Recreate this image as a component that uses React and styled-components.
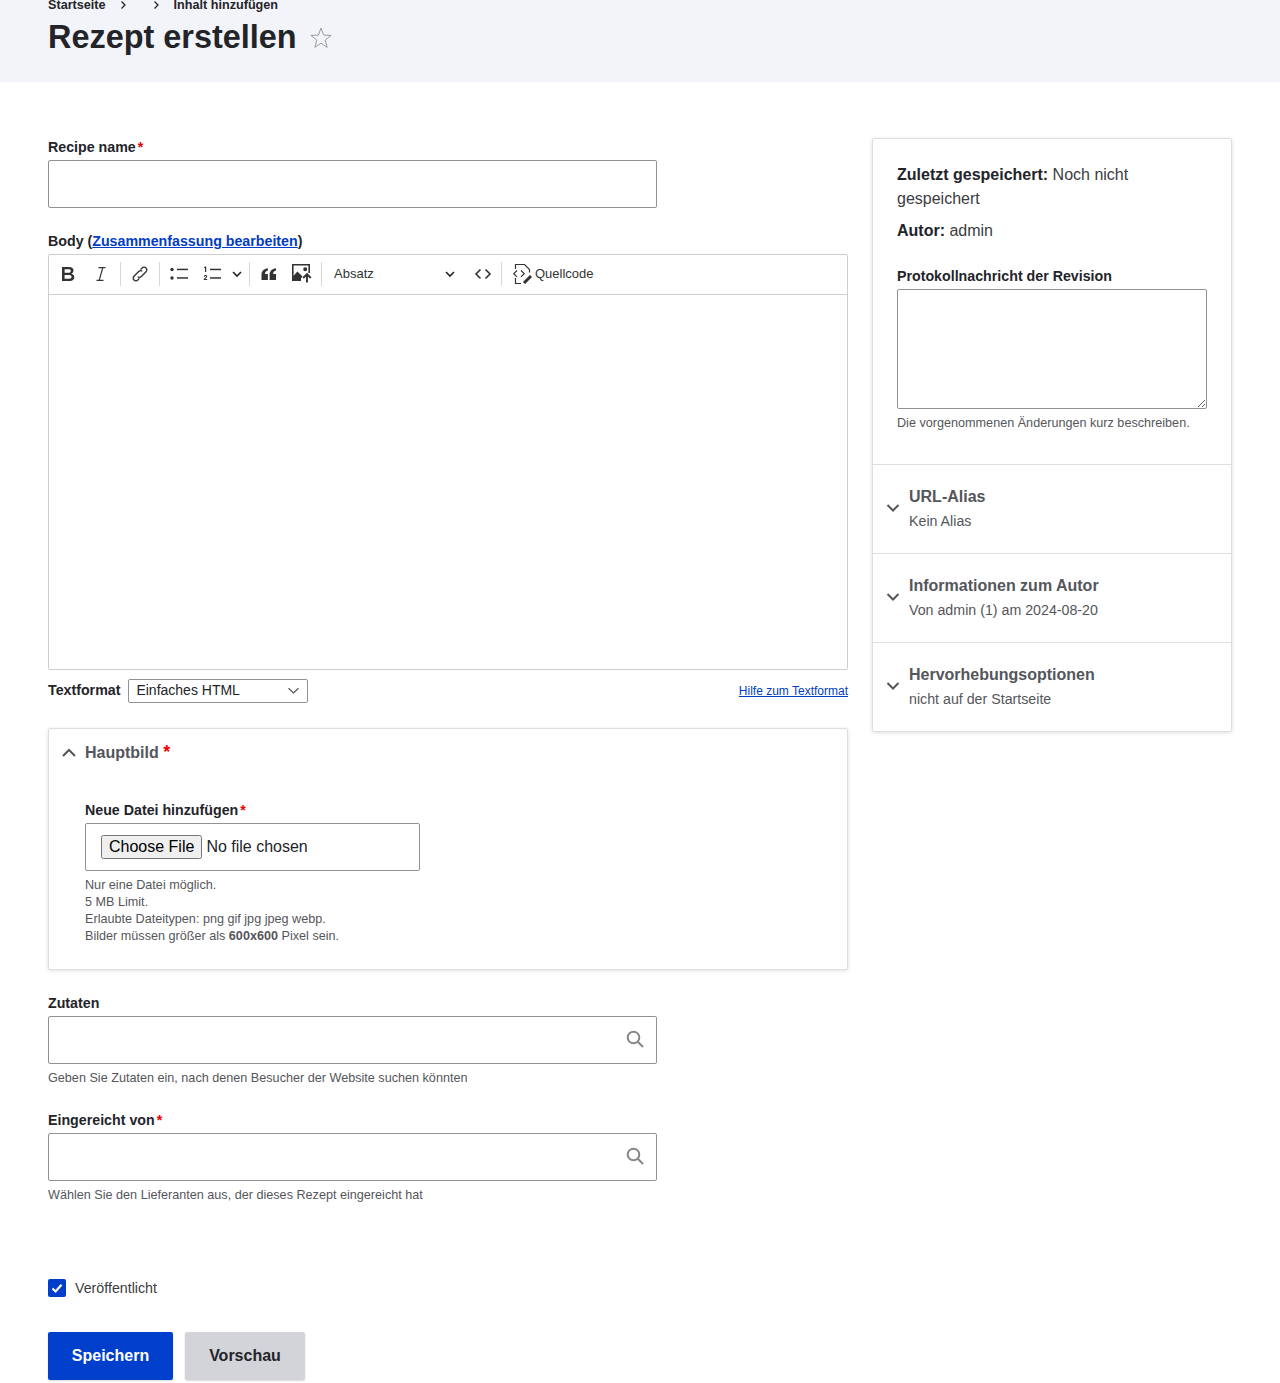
import React from 'react';
import styled, { createGlobalStyle } from 'styled-components';

const GlobalStyle = createGlobalStyle`
  html, body {
    margin: 0;
    padding: 0;
    background: #fff;
    color: #232429;
    font-family: "Liberation Sans", Arial, sans-serif;
  }
  * { box-sizing: border-box; }
`;

const colors = { text: '#232429', muted: '#55565b', border: '#919297', line: '#dedfe4', blue: '#003ecc' };

// Page header
const Header = styled.header`
  height: 82px;
  padding-left: 48px;
  background: #f3f4f9;
  overflow: hidden;
`;

const Crumbs = styled.nav`
  display: flex;
  align-items: center;
  gap: 14px;
  height: 10px;
  font-size: 12.64px;
  line-height: 10px;
  font-weight: 700;
  color: ${colors.text};
`;

const Gap = styled.span`
  width: 0;
  margin-left: -1px;
`;

const LastCrumb = styled.span`
  margin-left: 1px;
`;

const TitleRow = styled.div`
  display: flex;
  align-items: center;
  height: 40px;
  margin-top: 7px;
  gap: 12px;
`;

const Title = styled.h1`
  margin: 0;
  font-size: 32.43px;
  line-height: 40px;
  font-weight: 700;
`;

const StarIcon = styled.svg`
  margin-top: 2px;
`;

// Page columns
const Main = styled.main`
  display: grid;
  grid-template-columns: 800px 360px;
  column-gap: 24px;
  align-items: start;
  padding: 56px 48px 3px;
`;

const Label = styled.label`
  display: block;
  font-size: 14.22px;
  line-height: 18px;
  font-weight: 700;
  margin: ${p => p.$top || 0}px 0 4px;
`;

const Req = styled.span`
  color: #e00;
  margin-left: 2px;
`;

const HeadReq = styled.span`
  color: #e00;
  font-size: 18px;
  line-height: 16px;
`;

const TextInput = styled.input`
  display: block;
  width: ${p => p.$w || 609}px;
  height: 48px;
  padding: 0 16px;
  border: 1px solid ${colors.border};
  border-radius: 2px;
  background: #fff;
  font: inherit;
`;

const SearchWrap = styled.div`
  position: relative;
  width: 609px;
`;

const SearchIcon = styled.svg`
  position: absolute;
  right: 13px;
  top: 14px;
  width: 18px;
  height: 18px;
`;

const Hint = styled.div`
  font-size: 12.64px;
  line-height: 17px;
  color: ${colors.muted};
  margin-top: 6px;
`;

const BodyLink = styled.a`
  color: #003cc5;
  text-decoration: underline;
`;

// Rich text editor
const Editor = styled.div`
  height: 416px;
  border: 1px solid #ccced3;
  border-radius: 2px;
  display: flex;
  flex-direction: column;
`;

const Toolbar = styled.div`
  display: flex;
  align-items: center;
  gap: 1px;
  height: 40px;
  padding: 0 0 2px 3px;
  border-bottom: 1px solid #ccced3;
  flex: none;
`;

const ToolBtn = styled.span`
  display: flex;
  align-items: center;
  justify-content: center;
  width: ${p => p.$w || 32}px;
  height: 28px;
  margin-left: ${p => p.$ml || 0}px;
  color: ${colors.text};
`;

const Sep = styled.span`
  width: 1px;
  height: 24px;
  margin: 0 2px;
  background: #d6d7dc;
`;

const Dropdown = styled.span`
  display: flex;
  align-items: center;
  justify-content: space-between;
  width: 141px;
  height: 28px;
  padding: 0 11px 0 9px;
  font-size: 13px;
  color: #333;
`;

const SourceBtn = styled.span`
  display: flex;
  align-items: center;
  gap: 2px;
  margin-left: 7px;
  font-size: 13px;
  color: #333;
`;

const FormatRow = styled.div`
  display: flex;
  align-items: center;
  justify-content: space-between;
  height: 24px;
  margin-top: 9px;
`;

const FormatLeft = styled.div`
  display: flex;
  align-items: center;
  gap: 8px;
`;

const FormatLabel = styled.span`
  font-size: 14.22px;
  line-height: 22px;
  height: 24px;
  font-weight: 700;
`;

const FormatSelect = styled.div`
  display: flex;
  align-items: center;
  justify-content: space-between;
  width: 180px;
  height: 24px;
  padding: 0 7px 2px 7px;
  border: 1px solid ${colors.border};
  border-radius: 2px;
  font-size: 14px;
  font-weight: 400;
`;

const HelpLink = styled.a`
  font-size: 12px;
  color: #003cc5;
  text-decoration: underline;
`;

// Cards
const Card = styled.section`
  margin-top: ${p => p.$top || 0}px;
  border: 1px solid ${colors.line};
  border-radius: 2px;
  box-shadow: 0 1px 4px rgba(0, 0, 0, 0.12);
  background: #fff;
`;

const CardHead = styled.div`
  display: flex;
  align-items: center;
  gap: 8px;
  height: 48px;
  padding-left: 12px;
  font-size: 16px;
  font-weight: 700;
  color: ${colors.muted};
`;

const CardBody = styled.div`
  padding: 24px 24px 24px 36px;
`;

const FileBox = styled.div`
  display: flex;
  align-items: center;
  width: 335px;
  height: 48px;
  padding: 0 15px;
  border: 1px solid ${colors.border};
  border-radius: 2px;
`;

const FileInput = styled.input`
  font-family: "Liberation Sans", Arial, sans-serif;
  font-size: 16px;
`;

const HintLine = styled.div`
  font-size: 12.64px;
  line-height: 17px;
  color: ${colors.muted};
`;

// Sidebar
const MetaBlock = styled.div`
  padding: 24px 24px 32px;
  border-bottom: 1px solid ${colors.line};
  font-size: 16px;
  line-height: 24px;
  color: #3b3c41;
`;

const MetaLine = styled.div`
  margin-bottom: 8px;
  strong { color: ${colors.text}; }
`;

const RevisionLabel = styled(Label)`
  margin: 24px 0 4px;
  color: ${colors.text};
`;

const RevisionArea = styled.textarea`
  display: block;
  width: 310px;
  height: 120px;
  border: 1px solid ${colors.border};
  border-radius: 2px;
  background: #fff;
`;

const SideHint = styled.div`
  margin-top: 6px;
  font-size: 12.64px;
  line-height: 17px;
  color: ${colors.muted};
`;

const Row = styled.div`
  display: flex;
  align-items: center;
  gap: 8px;
  height: ${p => (p.$last ? 88 : 89)}px;
  padding-left: 12px;
  border-bottom: ${p => (p.$last ? 'none' : `1px solid ${colors.line}`)};
`;

const RowTitle = styled.div`
  font-size: 16px;
  line-height: 24px;
  font-weight: 700;
  color: ${colors.muted};
`;

const RowSummary = styled.div`
  font-size: 14.22px;
  line-height: 24px;
  color: ${colors.muted};
`;

// Footer of the form
const CheckRow = styled.div`
  display: flex;
  align-items: center;
  gap: 9px;
  margin-top: 75px;
  height: 18px;
  font-size: 14.22px;
  color: #3b3c41;
`;

const CheckBox = styled.span`
  display: flex;
  align-items: center;
  justify-content: center;
  width: 18px;
  height: 18px;
  border-radius: 2px;
  background: ${colors.blue};
`;

const Actions = styled.div`
  display: flex;
  gap: 12px;
  margin-top: 35px;
`;

const Button = styled.button`
  height: 48px;
  width: ${p => p.$w}px;
  border: 0;
  border-radius: 2px;
  font-family: inherit;
  font-size: 16px;
  font-weight: 700;
  color: ${p => (p.$primary ? '#fff' : colors.text)};
  background: ${p => (p.$primary ? colors.blue : '#d3d4d9')};
  box-shadow: 0 1px 2px rgba(0, 0, 0, 0.15);
`;

// Icons
const Chevron = ({ up }) => (
  <svg width="16" height="16" viewBox="0 0 16 16" fill="none">
    <path d={up ? 'M2 11 8 5l6 6' : 'M2.5 4 8 9.5 13.5 4'} stroke="#55565b" strokeWidth="2" />
  </svg>
);

const SmallChevron = () => (
  <svg width="10" height="10" viewBox="0 0 10 10" fill="none">
    <path d="M1 3l4 4 4-4" stroke="#232429" strokeWidth="1.6" />
  </svg>
);

const SelectChevron = () => (
  <svg width="13" height="13" viewBox="0 0 13 13" fill="none">
    <path d="M1.5 4.2 6.5 9l5-4.8" stroke="#55565b" strokeWidth="1.2" />
  </svg>
);

const CrumbArrow = () => (
  <svg width="6" height="10" viewBox="0 0 6 10" fill="none">
    <path d="M1.5 1.5 5 5 1.5 8.5" stroke="#232429" strokeWidth="1.3" />
  </svg>
);

const Search = () => (
  <SearchIcon viewBox="0 0 18 18" fill="none" stroke="#868686" strokeWidth="2">
    <circle cx="7.5" cy="7.5" r="5.8" />
    <path d="M11.8 11.8 17 17" />
  </SearchIcon>
);

const BoldIcon = () => (
  <svg width="20" height="20" viewBox="0 0 20 20">
    <path fillRule="evenodd" fill="#333" d="M4 3h7.2c2.7 0 4.3 1.4 4.3 3.6 0 1.4-.8 2.6-2 3.1 1.7.4 2.8 1.7 2.8 3.5 0 2.4-1.8 3.8-4.6 3.8H4V3zm2.6 2.2v3.5h4c1.3 0 2.2-.7 2.2-1.8 0-1.1-.8-1.7-2.2-1.7h-4zm0 5.7v3.9h4.6c1.5 0 2.4-.7 2.4-2 0-1.2-.9-1.9-2.4-1.9H6.6z" />
  </svg>
);

const ItalicIcon = () => (
  <svg width="20" height="20" viewBox="0 0 20 20" fill="none" stroke="#333" strokeWidth="1.2">
    <path d="M7.5 3.6h7M5.5 16.4h7M11.8 3.6 8.2 16.4" />
  </svg>
);

const LinkIcon = () => (
  <svg width="18" height="18" viewBox="0 0 20 20" fill="none" stroke="#333" strokeWidth="1.5" strokeLinecap="round">
    <path d="M11 4.6 12.4 3.3a3 3 0 0 1 4.3 4.2l-5.2 5.3a3 3 0 0 1-3.4.6" />
    <path d="M9 15.4 7.6 16.7a3 3 0 0 1-4.3-4.2l5.2-5.3a3 3 0 0 1 3.4-.6" />
  </svg>
);

const BulletIcon = () => (
  <svg width="20" height="20" viewBox="0 0 20 20" fill="#333">
    <circle cx="3" cy="5.5" r="1.7" />
    <circle cx="3" cy="14" r="1.7" />
    <rect x="8" y="4.7" width="11" height="1.5" />
    <rect x="8" y="13.2" width="11" height="1.5" />
  </svg>
);

const NumberedIcon = () => (
  <svg width="20" height="20" viewBox="0 0 20 20" fill="#333">
    <path d="M3 2.5h1.2v5.5H3V3.8L2 4.2V3.2z" />
    <path d="M1.8 12.4c.2-.9.9-1.3 1.7-1.3 1 0 1.7.6 1.7 1.4 0 .7-.4 1.1-1 1.6l-1 .9h2V16H1.7v-.9l1.8-1.7c.4-.3.5-.6.5-.8 0-.3-.2-.5-.6-.5s-.6.2-.7.6z" />
    <rect x="8" y="4.7" width="11" height="1.5" />
    <rect x="8" y="13.2" width="11" height="1.5" />
  </svg>
);

const QuoteIcon = () => (
  <svg width="20" height="20" viewBox="0 0 20 20" fill="#333">
    <path d="M2.5 16h6.4V10H6c0-1.6.9-2.9 2.9-3.4V4.2C5 4.7 2.5 7 2.5 10.6zM10.6 16H17V10h-2.9c0-1.6.9-2.9 2.9-3.4V4.2c-3.9.5-6.4 2.8-6.4 6.4z" />
  </svg>
);

const ImageIcon = () => (
  <svg width="20" height="20" viewBox="0 0 20 20">
    <path fill="#333" fillRule="evenodd" d="M0 0h18v9h-1.6V1.6H1.6V13H0zM13.2 3.2a2 2 0 1 1 0 4 2 2 0 0 1 0-4z" />
    <path fill="#333" d="M0 17v-3.5L5.4 7.4l5.2 5.2-1.6 1.6V17z" />
    <path fill="none" stroke="#333" strokeWidth="1.9" d="M15 18.5V10.5M11.2 14 15 10.2l3.8 3.8" />
  </svg>
);

const CodeIcon = () => (
  <svg width="20" height="20" viewBox="0 0 20 20" fill="none" stroke="#333" strokeWidth="1.6">
    <path d="M7.5 5.5 3 10l4.5 4.5M12.5 5.5 17 10l-4.5 4.5" />
  </svg>
);

const SourceIcon = () => (
  <svg width="21" height="22" viewBox="0 0 21 22" fill="none" stroke="#333" strokeWidth="1.2">
    <path d="M3.5 6V1.5h9l5 5v3M3.5 15v5.5H9" />
    <path d="M5 7.5 1.8 10.7 5 13.9M9 7.5l3.2 3.2L9 13.9" />
    <path d="M12 20l7-7" stroke="#333" strokeWidth="3" />
  </svg>
);

const Star = () => (
  <StarIcon width="24" height="24" viewBox="0 0 24 24" fill="none" stroke="#9a9ba0" strokeWidth="1">
    <path d="M12 2l2.6 7.1 7.5.3-5.9 4.7 2 7.3L12 17.2l-6.2 4.2 2-7.3-5.9-4.7 7.5-.3z" />
  </StarIcon>
);

const Check = () => (
  <svg width="14" height="14" viewBox="0 0 14 14" fill="none">
    <path d="M2.5 7.5 5.6 10.5 11.5 3.8" stroke="#fff" strokeWidth="2.2" />
  </svg>
);

const sideRows = [
  { title: 'URL-Alias', summary: 'Kein Alias' },
  { title: 'Informationen zum Autor', summary: 'Von admin (1) am 2024-08-20' },
  { title: 'Hervorhebungsoptionen', summary: 'nicht auf der Startseite' },
];

const App = () => (
  <>
    <GlobalStyle />
    <Header>
      <Crumbs>
        <span>Startseite</span>
        <CrumbArrow />
        <Gap />
        <CrumbArrow />
        <LastCrumb>Inhalt hinzufügen</LastCrumb>
      </Crumbs>
      <TitleRow>
        <Title>Rezept erstellen</Title>
        <Star />
      </TitleRow>
    </Header>

    <Main>
      <div>
        <Label>Recipe name<Req>*</Req></Label>
        <TextInput />

        <Label $top={24}>Body (<BodyLink href="#">Zusammenfassung bearbeiten</BodyLink>)</Label>
        <Editor>
          <Toolbar>
            <ToolBtn><BoldIcon /></ToolBtn>
            <ToolBtn><ItalicIcon /></ToolBtn>
            <Sep />
            <ToolBtn><LinkIcon /></ToolBtn>
            <Sep />
            <ToolBtn><BulletIcon /></ToolBtn>
            <ToolBtn><NumberedIcon /></ToolBtn>
            <ToolBtn $w={18} $ml={-1}><SmallChevron /></ToolBtn>
            <Sep />
            <ToolBtn><QuoteIcon /></ToolBtn>
            <ToolBtn><ImageIcon /></ToolBtn>
            <Sep />
            <Dropdown>Absatz<SmallChevron /></Dropdown>
            <ToolBtn $w={31}><CodeIcon /></ToolBtn>
            <Sep />
            <SourceBtn><SourceIcon />Quellcode</SourceBtn>
          </Toolbar>
        </Editor>
        <FormatRow>
          <FormatLeft>
            <FormatLabel>Textformat</FormatLabel>
            <FormatSelect>Einfaches HTML<SelectChevron /></FormatSelect>
          </FormatLeft>
          <HelpLink href="#">Hilfe zum Textformat</HelpLink>
        </FormatRow>

        <Card $top={25}>
          <CardHead>
            <Chevron up />
            <span>Hauptbild <HeadReq>*</HeadReq></span>
          </CardHead>
          <CardBody>
            <Label>Neue Datei hinzufügen<Req>*</Req></Label>
            <FileBox><FileInput type="file" /></FileBox>
            <Hint>Nur eine Datei möglich.</Hint>
            <HintLine>5 MB Limit.</HintLine>
            <HintLine>Erlaubte Dateitypen: png gif jpg jpeg webp.</HintLine>
            <HintLine>Bilder müssen größer als <strong>600x600</strong> Pixel sein.</HintLine>
          </CardBody>
        </Card>

        <Label $top={24}>Zutaten</Label>
        <SearchWrap>
          <TextInput />
          <Search />
        </SearchWrap>
        <Hint>Geben Sie Zutaten ein, nach denen Besucher der Website suchen könnten</Hint>

        <Label $top={24}>Eingereicht von<Req>*</Req></Label>
        <SearchWrap>
          <TextInput />
          <Search />
        </SearchWrap>
        <Hint>Wählen Sie den Lieferanten aus, der dieses Rezept eingereicht hat</Hint>

        <CheckRow>
          <CheckBox><Check /></CheckBox>
          Veröffentlicht
        </CheckRow>
        <Actions>
          <Button $primary $w={125}>Speichern</Button>
          <Button $w={120}>Vorschau</Button>
        </Actions>
      </div>

      <Card>
        <MetaBlock>
          <MetaLine><strong>Zuletzt gespeichert:</strong> Noch nicht gespeichert</MetaLine>
          <MetaLine><strong>Autor:</strong> admin</MetaLine>
          <RevisionLabel>Protokollnachricht der Revision</RevisionLabel>
          <RevisionArea />
          <SideHint>Die vorgenommenen Änderungen kurz beschreiben.</SideHint>
        </MetaBlock>
        {sideRows.map((row, i) => (
          <Row key={row.title} $last={i === sideRows.length - 1}>
            <Chevron />
            <div>
              <RowTitle>{row.title}</RowTitle>
              <RowSummary>{row.summary}</RowSummary>
            </div>
          </Row>
        ))}
      </Card>
    </Main>
  </>
);

export default App;
